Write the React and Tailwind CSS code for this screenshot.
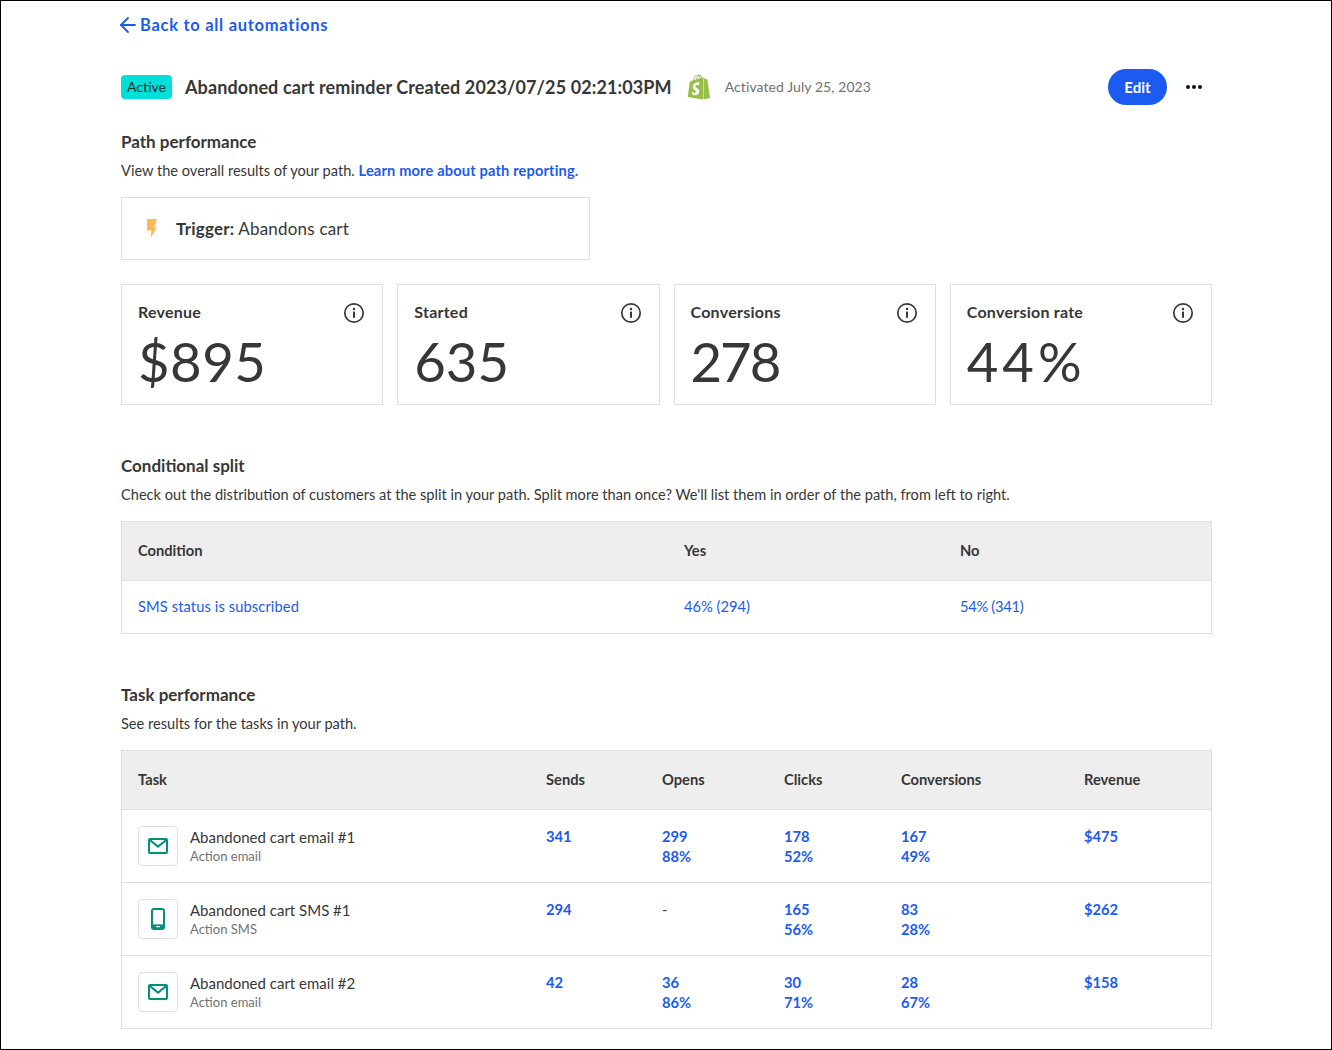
import React from "react";
import { ArrowLeft } from "lucide-react";
import { FaShopify } from "react-icons/fa";

const Info = () => (
  <svg width="22" height="22" viewBox="0 0 22 22" fill="none" className="block">
    <circle cx="11" cy="11" r="9.2" stroke="#373737" strokeWidth="1.7" />
    <circle cx="11" cy="7" r="1.2" fill="#373737" />
    <rect x="10" y="9.6" width="2" height="6.2" fill="#373737" />
  </svg>
);
const Mail = () => (
  <svg width="20" height="16" viewBox="0 0 20 16" fill="none">
    <rect x="1" y="1" width="18" height="14" rx="1" stroke="#00907c" strokeWidth="2" />
    <path d="M1.5 1.8 L10 8.6 L18.5 1.8" stroke="#00907c" strokeWidth="2" />
  </svg>
);
const Phone = () => (
  <svg width="14" height="22" viewBox="0 0 14 22" fill="none">
    <rect x="1" y="1" width="12" height="20" rx="2" stroke="#00907c" strokeWidth="2" />
    <rect x="1" y="16.4" width="12" height="4.6" fill="#00907c" />
    <rect x="5" y="18" width="4" height="1.2" fill="#fff" />
  </svg>
);
function Metric({ label, value, className = "" }) {
  return (
    <div className="h-[121px] border border-[#dfdfdf] px-4 pt-[17px]">
      <div className="flex h-[22px] items-center justify-between">
        <span className="pb-[2px] text-[16px] leading-[20px] font-bold tracking-[0.25px] text-[#373737]">{label}</span>
        <span className="mr-[1px]"><Info /></span>
      </div>
      <div className={`mt-[7px] text-[54.5px] leading-[60px] text-[#373737] ${className}`}>{value}</div>
    </div>
  );
}
const H2 = ({ children }) => <h2 className="text-[17px] leading-6 font-bold text-[#373737]">{children}</h2>;
const P = ({ children, className = "" }) => <p className={`text-[14.6px] leading-5 text-[#373737] ${className}`}>{children}</p>;

const tasks = [
  { icon: <Mail />, name: "Abandoned cart email #1", sub: "Action email", v: [["341"], ["299", "88%"], ["178", "52%"], ["167", "49%"], ["$475"]] },
  { icon: <Phone />, name: "Abandoned cart SMS #1", sub: "Action SMS", v: [["294"], null, ["165", "56%"], ["83", "28%"], ["$262"]] },
  { icon: <Mail />, name: "Abandoned cart email #2", sub: "Action email", v: [["42"], ["36", "86%"], ["30", "71%"], ["28", "67%"], ["$158"]] },
];
const taskCols = "grid grid-cols-[408px_116px_122px_117px_183px_1fr]";

export default function App() {
  return (
    <div className="h-[1050px] overflow-hidden border border-black bg-white pl-[120px] font-['Lato','Liberation_Sans',sans-serif]">
      <div className="w-[1091px]">
        <a className="mt-[12px] flex h-6 items-center text-[16.5px] font-bold tracking-[0.72px] text-[#1c5bef]">
          <ArrowLeft size={24} strokeWidth={1.8} className="ml-[-5px]" />
          Back to all automations
        </a>

        <div className="mt-[28px] flex h-11 items-center">
          <span className="flex h-6 w-[51px] items-center justify-center rounded bg-[#00dfd8] text-sm text-[#1f2a30]">Active</span>
          <span className="ml-[13px] text-[18px] font-bold tracking-[0.1px] text-[#373737]">Abandoned cart reminder Created 2023/07/25 02:21:03PM</span>
          <FaShopify className="ml-[14px] text-[#95bf47]" size={26} />
          <span className="ml-[13px] pb-[1px] text-[14px] tracking-[0.08px] text-[#727272]">Activated July 25, 2023</span>
          <button className="ml-auto flex h-9 w-[59px] items-center justify-center rounded-full bg-[#1c5bef] text-[15px] font-bold text-white">Edit</button>
          <span className="mr-[10px] ml-[19px] flex gap-[2px]">
            <i className="size-1 rounded-full bg-[#111]" /><i className="size-1 rounded-full bg-[#111]" /><i className="size-1 rounded-full bg-[#111]" />
          </span>
        </div>

        <div className="mt-[21px]"><H2>Path performance</H2></div>
        <P className="mt-[7px]">View the overall results of your path. <a className="font-bold tracking-[0.17px] text-[#1c5bef]">Learn more about path reporting.</a></P>

        <div className="mt-4 flex h-[63px] w-[469px] items-center border border-[#dfdfdf] pl-[25px]">
          <svg width="10" height="19" viewBox="0 0 10 19"><path d="M0 0H10L7 8.5H10L3.5 19L4.5 11.5H0Z" fill="#ffb858" /></svg>
          <span className="ml-[19px] text-[17px] tracking-[0.2px] text-[#373737]"><b>Trigger:</b> Abandons cart</span>
        </div>

        <div className="mt-6 grid grid-cols-4 gap-[14px]">
          <Metric label="Revenue" value="$895" className="tracking-[0.5px]" />
          <Metric label="Started" value="635" />
          <Metric label="Conversions" value="278" className="tracking-[-2px]" />
          <Metric label="Conversion rate" value="44%" className="tracking-[4px]" />
        </div>

        <div className="mt-[49px]"><H2>Conditional split</H2></div>
        <P className="mt-[7px]">Check out the distribution of customers at the split in your path. Split more than once? We'll list them in order of the path, from left to right.</P>

        <div className="mt-4 border border-[#dfdfdf] text-[14.7px]">
          <div className="grid h-[59px] grid-cols-[546px_276px_1fr] items-center border-b border-[#dfdfdf] bg-[#eeeeee] px-4 pb-[1px] font-bold text-[#373737]">
            <span>Condition</span><span>Yes</span><span>No</span>
          </div>
          <div className="grid h-[52px] grid-cols-[546px_276px_1fr] items-center px-4 pb-[1px] text-[#1c5bef]">
            <span className="tracking-[0.1px]">SMS status is subscribed</span><span>46% (294)</span><span className="tracking-[-0.3px]">54% (341)</span>
          </div>
        </div>

        <div className="mt-[49px]"><H2>Task performance</H2></div>
        <P className="mt-[7px]">See results for the tasks in your path.</P>

        <div className="mt-4 border border-[#dfdfdf] text-[14.7px]">
          <div className={`${taskCols} h-[59px] items-center border-b border-[#dfdfdf] bg-[#eeeeee] pb-[1px] pl-4 font-bold text-[#373737]`}>
            <span>Task</span><span>Sends</span><span>Opens</span><span>Clicks</span><span>Conversions</span><span>Revenue</span>
          </div>
          {tasks.map((t, i) => (
            <div key={t.name} className={`${taskCols} pl-4 ${i < 2 ? "h-[73px] border-b border-[#dfdfdf]" : "h-[72px]"}`}>
              <div className="flex items-center pb-[1px]">
                <span className="flex size-10 items-center justify-center rounded border border-[#dfdfdf]">{t.icon}</span>
                <div className="ml-3 pt-[2px]">
                  <div className="text-[15px] leading-5 text-[#373737]">{t.name}</div>
                  <div className="text-[13px] leading-[19px] text-[#727272]">{t.sub}</div>
                </div>
              </div>
              {t.v.map((c, j) => (
                <div key={j} className="pt-[16px] leading-5 font-bold text-[#1c5bef]">
                  {c ? c.map((x) => <div key={x}>{x}</div>) : <div className="font-normal text-[#373737]">-</div>}
                </div>
              ))}
            </div>
          ))}
        </div>
      </div>
    </div>
  );
}
